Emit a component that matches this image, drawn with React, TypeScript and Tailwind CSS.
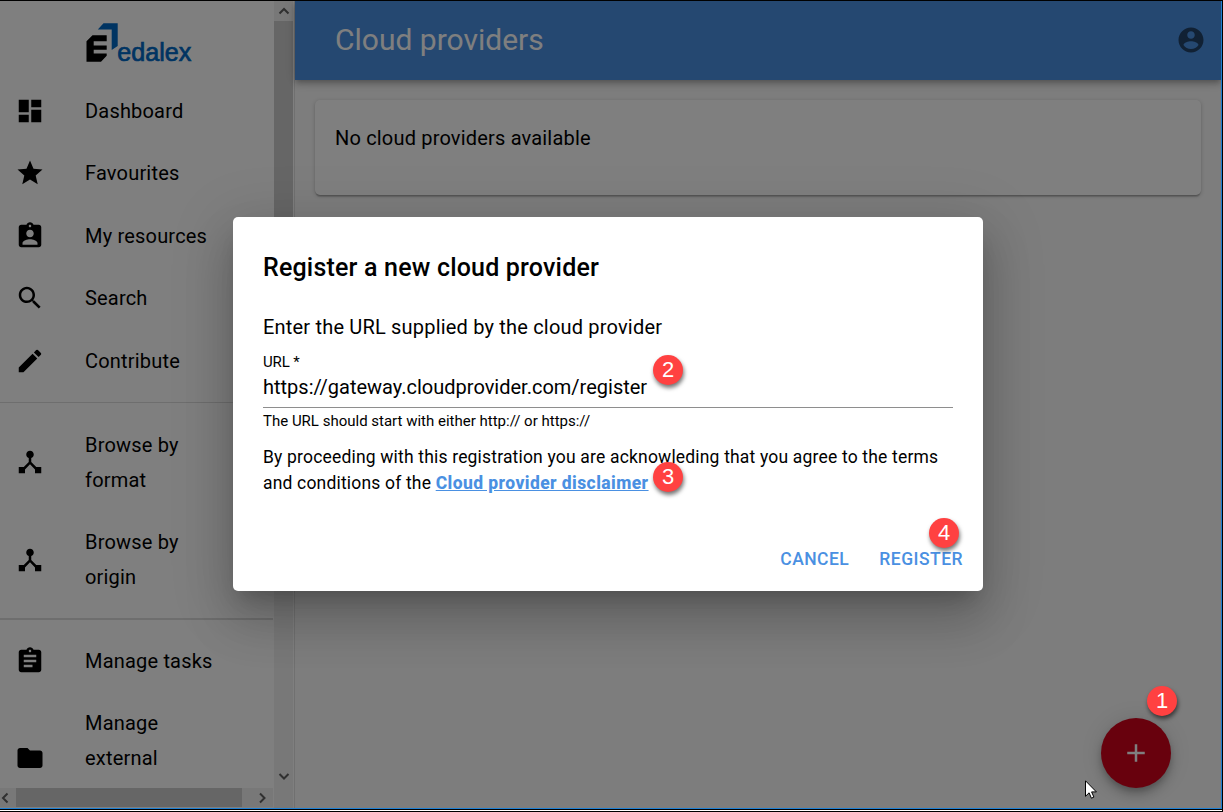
import React from "react";

const PATHS = {
  dashboard: "M3 13h8V3H3v10zm0 8h8v-6H3v6zm10 0h8V11h-8v10zm0-18v6h8V3h-8z",
  star: "M12 17.27 18.18 21l-1.64-7.03L22 9.24l-7.19-.61L12 2 9.19 8.63 2 9.24l5.46 4.73L5.82 21z",
  badge:
    "M19 3h-4.18C14.4 1.84 13.3 1 12 1c-1.3 0-2.4.84-2.82 2H5c-1.1 0-2 .9-2 2v14c0 1.1.9 2 2 2h14c1.1 0 2-.9 2-2V5c0-1.1-.9-2-2-2zm-7 0c.55 0 1 .45 1 1s-.45 1-1 1-1-.45-1-1 .45-1 1-1zm0 4c1.66 0 3 1.34 3 3s-1.34 3-3 3-3-1.34-3-3 1.34-3 3-3zm6 12H6v-1.4c0-2 4-3.1 6-3.1s6 1.1 6 3.1V19z",
  search:
    "M15.5 14h-.79l-.28-.27C15.41 12.59 16 11.11 16 9.5 16 5.91 13.09 3 9.5 3S3 5.91 3 9.5 5.91 16 9.5 16c1.61 0 3.09-.59 4.23-1.57l.27.28v.79l5 4.99L20.49 19l-4.99-5zm-6 0C7.01 14 5 11.99 5 9.5S7.01 5 9.5 5 14 7.01 14 9.5 11.99 14 9.5 14z",
  edit: "M3 17.25V21h3.75L17.81 9.94l-3.75-3.75L3 17.25zM20.71 7.04c.39-.39.39-1.02 0-1.41l-2.34-2.34a.9959.9959 0 0 0-1.41 0l-1.83 1.83 3.75 3.75 1.83-1.83z",
  hub: "M17 16l-4-4V8.82C14.16 8.4 15 7.3 15 6c0-1.66-1.34-3-3-3S9 4.34 9 6c0 1.3.84 2.4 2 2.82V12l-4 4H3v5h5v-3.05l4-4.2 4 4.2V21h5v-5h-4z",
  tasks:
    "M19 3h-4.18C14.4 1.84 13.3 1 12 1c-1.3 0-2.4.84-2.82 2H5c-1.1 0-2 .9-2 2v14c0 1.1.9 2 2 2h14c1.1 0 2-.9 2-2V5c0-1.1-.9-2-2-2zm-7 0c.55 0 1 .45 1 1s-.45 1-1 1-1-.45-1-1 .45-1 1-1zm2 14H7v-2h7v2zm3-4H7v-2h10v2zm0-4H7V7h10v2z",
  folder: "M10 4H4c-1.1 0-1.99.9-1.99 2L2 18c0 1.1.9 2 2 2h16c1.1 0 2-.9 2-2V8c0-1.1-.9-2-2-2h-8l-2-2z",
  account:
    "M12 2C6.48 2 2 6.48 2 12s4.48 10 10 10 10-4.48 10-10S17.52 2 12 2zm0 3c1.66 0 3 1.34 3 3s-1.34 3-3 3-3-1.34-3-3 1.34-3 3-3zm0 14.2c-2.5 0-4.71-1.28-6-3.22.03-1.99 4-3.08 6-3.08 1.99 0 5.97 1.09 6 3.08-1.29 1.94-3.5 3.22-6 3.22z",
  add: "M19 13h-6v6h-2v-6H5v-2h6V5h2v6h6v2z",
};

function Icon({ name, className = "" }: { name: keyof typeof PATHS; className?: string }) {
  return (
    <svg viewBox="0 0 24 24" fill="currentColor" className={"size-[30px] shrink-0 " + className}>
      <path d={PATHS[name]} />
    </svg>
  );
}

function NavItem({
  icon,
  lines,
  tall = false,
}: {
  icon: keyof typeof PATHS;
  lines: string[];
  tall?: boolean;
}) {
  return (
    <li className={"flex shrink-0 items-center pl-[15px] " + (tall ? "h-[132.5px]" : "py-[13.75px]")}>
      <Icon name={icon} className="mb-[0.5px]" />
      <span className={"ml-10 flex flex-col text-[20px] leading-[35px] tracking-[0.19px] " + (tall ? "h-[105px]" : "")}>
        {lines.map((line) => (
          <span key={line}>{line}</span>
        ))}
      </span>
    </li>
  );
}

function Logo() {
  return (
    <svg viewBox="0 0 110 44" className="ml-[84px] h-11 w-[110px] shrink-0">
      <path d="M19.5 2.3H33.7V25L27.7 29V8.4H13.8z" fill="#0068c4" />
      <path
        d="M8.5 14.2H22.7V20.2H9.7V24.4H22.7V28.7H9.7V32.6H22.7V34.8L17 40.8H2.5V20.2z"
        fill="#000"
      />
      <text
        x="33.3"
        y="40"
        fontSize="25"
        textLength="74"
        lengthAdjust="spacingAndGlyphs"
        fill="#0068c4"
        stroke="#0068c4"
        strokeWidth="0.7"
        fontFamily="Liberation Sans, sans-serif"
      >
        edalex
      </text>
    </svg>
  );
}

function Chevron({ d }: { d: string }) {
  return (
    <svg viewBox="0 0 12 12" className="size-3 shrink-0" fill="none" stroke="#606060" strokeWidth="2">
      <path d={d} />
    </svg>
  );
}

function Sidebar() {
  return (
    <aside className="flex h-full w-[295px] shrink-0 border-r border-[#e0e0e0] bg-white">
      <div className="flex w-[273px] flex-col">
        <nav className="flex h-[787px] flex-col overflow-hidden pt-5">
          <Logo />
          <ul className="mt-[14.75px] flex flex-col">
            <NavItem icon="dashboard" lines={["Dashboard"]} />
            <NavItem icon="star" lines={["Favourites"]} />
            <NavItem icon="badge" lines={["My resources"]} />
            <NavItem icon="search" lines={["Search"]} />
            <NavItem icon="edit" lines={["Contribute"]} />
            <li className="mt-[10px] mb-[10.5px] h-px shrink-0 bg-[#dcdcdc]" />
            <NavItem icon="hub" lines={["Browse by", "format"]} />
            <NavItem icon="hub" lines={["Browse by", "origin"]} />
            <li className="mt-[9px] mb-[10px] h-[2px] shrink-0 bg-[#dcdcdc]" />
            <NavItem icon="tasks" lines={["Manage tasks"]} />
            <NavItem icon="folder" lines={["Manage", "external"]} tall />
          </ul>
        </nav>
        <div className="flex h-[19px] items-center bg-[#f0f0f0]">
          <Chevron d="M7.5 1.5 3 6l4.5 4.5" />
          <div className="ml-1 h-full w-[226px] bg-[#cdcdcd]" />
          <div className="ml-[14px]">
            <Chevron d="M4 1.5 8.5 6 4 10.5" />
          </div>
        </div>
      </div>
      <div className="ml-px flex w-[19px] flex-col items-center bg-[#f0f0f0]">
        <div className="flex h-5 items-center">
          <Chevron d="M1.5 8.5 6 4l4.5 4.5" />
        </div>
        <div className="h-[360px] w-full bg-[#cdcdcd]" />
        <div className="mt-auto mb-[26px]">
          <Chevron d="M1.5 4 6 8.5 10.5 4" />
        </div>
      </div>
    </aside>
  );
}

function Badge({ n, className }: { n: number; className: string }) {
  return (
    <div
      className={
        "absolute flex size-[30px] items-center justify-center rounded-full bg-[#ff4141] font-['Liberation_Sans',sans-serif] text-[22px] leading-none text-white shadow-[1px_3px_4px_rgba(0,0,0,0.55)] " +
        className
      }
    >
      {n}
    </div>
  );
}

function RegisterDialog() {
  return (
    <div
      role="dialog"
      className="absolute top-[217px] left-[233px] flex h-[374px] w-[750px] flex-col rounded-[5px] bg-white px-[30px] shadow-[0_14px_19px_-9px_rgba(0,0,0,0.2),0_30px_48px_4px_rgba(0,0,0,0.14),0_11px_58px_10px_rgba(0,0,0,0.12)]"
    >
      <h2 className="mt-[31px] text-[25px] leading-10 font-medium tracking-[0.19px]">Register a new cloud provider</h2>
      <p className="mt-[24px] text-[20px] leading-[30px] tracking-[0.19px]">Enter the URL supplied by the cloud provider</p>
      <label className="mt-[10px] text-[15px] leading-5 tracking-[-0.15px]">URL *</label>
      <div className="border-b border-[#8e8e8e] pb-[5px] text-[20px] leading-[30px]">
        https://gateway.cloudprovider.com/register
      </div>
      <p className="mt-[3px] text-[15px] leading-5">The URL should start with either http:// or https://</p>
      <p className="mt-[13px] text-[17.5px] leading-[26px] tracking-[0.18px]">
        By proceeding with this registration you are acknowleding that you agree to the terms
        <br />
        and conditions of the{" "}
        <a className="font-extrabold tracking-[0.42px] text-[#4a90e2] underline">Cloud provider disclaimer</a>
      </p>
      <div className="mt-[48px] -mr-[10px] flex justify-end gap-[30px] text-[17.5px] leading-[30px] font-medium tracking-[0.47px] text-[#4a90e2]">
        <button>CANCEL</button>
        <button>REGISTER</button>
      </div>
    </div>
  );
}

export default function App() {
  return (
    <div className="relative flex h-[812px] w-[1223px] flex-col overflow-hidden bg-black pt-px font-['Roboto',sans-serif] text-black">
      <div className="flex h-[808px] w-[1222px] flex-col border-r border-b border-[#1e7fd2]">
        <div className="relative flex h-[807px] w-[1221px] overflow-hidden">
          <Sidebar />
          <div className="flex grow flex-col bg-[#fafafa]">
            <header className="flex h-[79px] items-center justify-between bg-[#4a90e2] pr-[15px] pb-[2px] pl-10 text-white shadow-[0_2px_5px_-1px_rgba(0,0,0,0.2),0_5px_6px_rgba(0,0,0,0.14),0_1px_12px_rgba(0,0,0,0.12)]">
              <h1 className="text-[30px] leading-10">Cloud providers</h1>
              <Icon name="account" className="text-black/54" />
            </header>
            <section className="mx-5 mt-5 h-[95px] rounded-[5px] bg-white px-5 pt-[23px] text-[20px] leading-[30px] tracking-[0.18px] shadow-[0_1px_4px_rgba(0,0,0,0.2),0_1px_1px_rgba(0,0,0,0.14),0_3px_1px_-1px_rgba(0,0,0,0.12)]">
              No cloud providers available
            </section>
          </div>
          <button className="absolute top-[717px] left-[1101px] flex size-[70px] items-center justify-center rounded-full bg-[#d0021b] text-white shadow-[0_4px_6px_-1px_rgba(0,0,0,0.2),0_8px_12px_rgba(0,0,0,0.14),0_1px_22px_rgba(0,0,0,0.12)]">
            <Icon name="add" />
          </button>
          <div className="absolute inset-0 bg-black/50" />
        </div>
      </div>
      <div className="mt-px h-px w-[1222px] bg-white" />
      <RegisterDialog />
      <Badge n={1} className="top-[686px] left-[1147px]" />
      <Badge n={2} className="top-[355px] left-[653px]" />
      <Badge n={3} className="top-[462px] left-[653px]" />
      <Badge n={4} className="top-[518px] left-[929px]" />
      <svg viewBox="0 0 12 19" className="absolute top-[780px] left-[1085px] h-[19px] w-3">
        <path
          d="M.5.8V16.3L4.1 12.8 6.4 18.2 8.9 17.1 6.6 11.9H11.4z"
          fill="#fff"
          stroke="#000"
          strokeWidth="1"
        />
      </svg>
    </div>
  );
}
